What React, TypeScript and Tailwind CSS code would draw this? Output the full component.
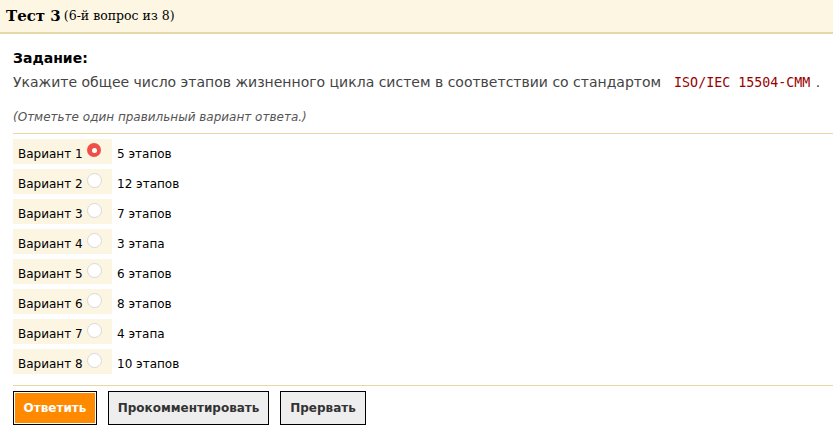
const variants = [
  "5 этапов",
  "12 этапов",
  "7 этапов",
  "3 этапа",
  "6 этапов",
  "8 этапов",
  "4 этапа",
  "10 этапов",
];

export default function App() {
  return (
    <div className="w-[833px] h-[443px] bg-white font-['DejaVu_Sans',sans-serif] text-black">
      {/* header */}
      <div className="h-[34px] bg-[#fdf6e3] border-b-2 border-[#e6d7a6] flex items-center pl-[6px] font-['DejaVu_Serif',serif]">
        <span className="text-[15px] font-bold">Тест 3</span>
        <span className="text-[12.5px] ml-[3px]">(6-й вопрос из 8)</span>
      </div>

      <div className="pl-[13px]">
        <div className="mt-[16px] text-[14px] font-bold leading-[17px]">Задание:</div>
        <div className="mt-[7px] text-[14px] leading-[17px] text-[#444]">
          Укажите общее число этапов жизненного цикла систем в соответствии со стандартом
          <code className="ml-[13px] mr-[1px] font-['DejaVu_Sans_Mono',monospace] text-[13.3px] text-[#990000]">ISO/IEC 15504-CMM</code>{" "}
          .
        </div>
        <div className="mt-[18px] pb-[8px] border-b border-[#e6d7a6] text-[12px] italic leading-[16px] text-[#555]">
          (Отметьте один правильный вариант ответа.)
        </div>

        <div className="mt-[5px] flex flex-col gap-[5px]">
          {variants.map((v, i) => (
            <div key={i} className="flex h-[25px] items-center">
              <div className="w-[99px] h-full bg-[#fcf5e1] flex items-center pt-[4px] pl-[5px] text-[12px] relative">
                <span>Вариант {i + 1}</span>
                {i === 0 ? (
                  <span className="absolute left-[74px] top-[4px] w-[14px] h-[14px] rounded-full bg-[#ee5049] flex items-center justify-center">
                    <span className="w-[5px] h-[5px] rounded-full bg-white" />
                  </span>
                ) : (
                  <span className="absolute left-[74px] top-[4px] w-[15px] h-[15px] rounded-full bg-white border border-[#d8d8d8]" />
                )}
              </div>
              <span className="ml-[5px] pt-[4px] text-[12px]">{v}</span>
            </div>
          ))}
        </div>

        <div className="mt-[11px] border-t border-[#e6d7a6] pt-[5px] flex gap-[11px]">
          <button className="h-[34px] w-[84px] border border-black bg-[#ff8a00] outline outline-1 outline-white -outline-offset-2 text-white text-[12px] font-bold">
            Ответить
          </button>
          <button className="h-[34px] w-[161px] border border-black bg-[#eeeeee] text-[#333] text-[12px] font-bold">
            Прокомментировать
          </button>
          <button className="h-[34px] w-[86px] border border-black bg-[#eeeeee] text-[#333] text-[12px] font-bold">
            Прервать
          </button>
        </div>
      </div>
    </div>
  );
}
